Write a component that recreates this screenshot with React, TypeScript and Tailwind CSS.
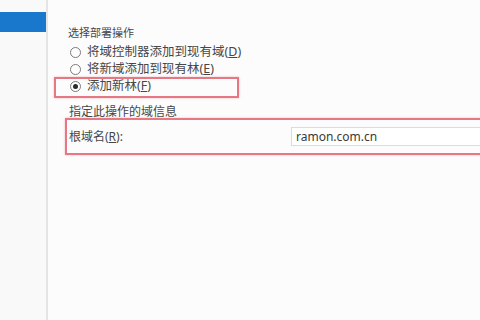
const font = { fontFamily: '"Noto Sans", "Noto Sans CJK SC", sans-serif' };

function Radio({ label, checked }: { label: React.ReactNode; checked?: boolean }) {
  return (
    <div className="flex items-center h-[16px] gap-[6px]">
      <span className="w-[11px] h-[11px] rounded-full border border-[#7a7a7a] bg-white flex items-center justify-center">
        {checked && <span className="w-[5px] h-[5px] rounded-full bg-[#2a2a2a]" />}
      </span>
      <span className="text-[12.5px] leading-[16px] text-[#474747]">{label}</span>
    </div>
  );
}

export default function App() {
  return (
    <div className="w-[480px] h-[320px] overflow-hidden flex bg-[#fcfcfd]" style={font}>
      <div className="w-[46px] shrink-0 bg-[#f9f9f9] pt-[12px]">
        <div className="h-[20px] bg-[#1a78cc]" />
      </div>
      <div className="w-[2px] shrink-0 bg-[#e4e4e4]" />
      <div className="flex-1 flex flex-col">
        <div className="ml-[20px] mt-[25px] h-[16px] text-[11px] leading-[16px] text-[#474747]">选择部署操作</div>
        <div className="ml-[22px] mt-[3px]">
          <Radio label={<>将域控制器添加到现有域(<u>D</u>)</>} />
        </div>
        <div className="ml-[22px] mt-[1px]">
          <Radio label={<>将新域添加到现有林(<u>E</u>)</>} />
        </div>
        <div className="ml-[6px] w-[185px] h-[21px] shrink-0 border-2 border-[#e57882] shadow-[0_0_2px_rgba(229,120,130,0.5)] pl-[14px]">
          <div className="-mt-[1px]">
            <Radio checked label={<>添加新林(<u>F</u>)</>} />
          </div>
        </div>
        <div className="ml-[21px] mt-[6px] h-[16px] text-[12px] leading-[16px] text-[#474747]">指定此操作的域信息</div>
        <div className="ml-[17px] mt-[-2px] w-[440px] h-[37px] shrink-0 border-2 border-[#e57882] shadow-[0_0_2px_rgba(229,120,130,0.5)] flex items-center">
          <div className="w-[224px] shrink-0 pl-[2px] text-[12px] text-[#474747]">根域名(<u>R</u>):</div>
          <div className="flex-1 h-[19px] border border-[#dcdcdc] bg-white flex items-center pl-[4px] text-[12px] text-[#3a3a3a]">
            ramon.com.cn
          </div>
        </div>
      </div>
    </div>
  );
}
